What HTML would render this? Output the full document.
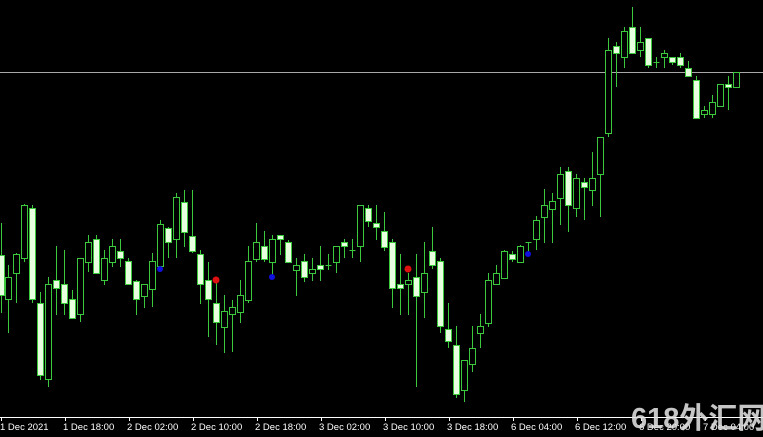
<!DOCTYPE html>
<html><head><meta charset="utf-8"><style>
html,body{margin:0;padding:0;background:#000;width:763px;height:437px;overflow:hidden}
svg{display:block}
.l{font-family:"Liberation Sans",sans-serif;font-size:9.5px;fill:#fff}
.wm{font-family:"Liberation Sans","Noto Sans CJK SC",sans-serif;font-size:29px;font-weight:bold;fill:#e0e0e0;fill-opacity:0.88}
</style></head><body>
<svg id="s" width="763" height="437" xmlns="http://www.w3.org/2000/svg">
<rect width="763" height="437" fill="#000"/>
<line x1="0" y1="72.5" x2="763" y2="72.5" stroke="#a8a8a8" stroke-width="1"/>
<g id="c"></g>
<circle cx="160" cy="269" r="3" fill="#1010e0"/>
<circle cx="272" cy="277" r="3" fill="#1010e0"/>
<circle cx="528" cy="254" r="3" fill="#1010e0"/>
<circle cx="216" cy="280" r="3.5" fill="#e01010"/>
<circle cx="408" cy="269" r="3.5" fill="#e01010"/>
<line x1="0" y1="417.5" x2="763" y2="417.5" stroke="#fff" stroke-width="1"/>
<g stroke="#fff" stroke-width="1">
<line x1="1.5" y1="417" x2="1.5" y2="421"/><line x1="65.5" y1="417" x2="65.5" y2="421"/><line x1="129.5" y1="417" x2="129.5" y2="421"/><line x1="193.5" y1="417" x2="193.5" y2="421"/><line x1="257.5" y1="417" x2="257.5" y2="421"/><line x1="321.5" y1="417" x2="321.5" y2="421"/><line x1="385.5" y1="417" x2="385.5" y2="421"/><line x1="449.5" y1="417" x2="449.5" y2="421"/><line x1="513.5" y1="417" x2="513.5" y2="421"/><line x1="577.5" y1="417" x2="577.5" y2="421"/><line x1="641.5" y1="417" x2="641.5" y2="421"/><line x1="705.5" y1="417" x2="705.5" y2="421"/>
</g>
<g class="l">
<text x="0" y="430">1 Dec 2021</text><text x="63" y="430">1 Dec 18:00</text><text x="127" y="430">2 Dec 02:00</text><text x="191" y="430">2 Dec 10:00</text><text x="255" y="430">2 Dec 18:00</text><text x="319" y="430">3 Dec 02:00</text><text x="383" y="430">3 Dec 10:00</text><text x="447" y="430">3 Dec 18:00</text><text x="511" y="430">6 Dec 04:00</text><text x="575" y="430">6 Dec 12:00</text><text x="639" y="430">6 Dec 20:00</text><text x="703" y="430">7 Dec 04:00</text>
</g>
<text class="wm" x="631" y="428">618外汇网</text>
</svg>
<script>
var d=[
[1,223,313,255,295,1],[8,265,333,277,299,0],[16,253,303,254,273,0],[24,204,262,205,258,0],[32,205,303,208,299,1],
[40,292,380,303,375,1],[48,277,387,284,379,0],[56,246,315,280,288,1],[64,250,315,284,303,1],[72,290,318,299,318,1],
[80,258,322,258,314,0],[88,235,272,242,262,0],[96,235,273,239,273,1],[104,250,285,258,280,0],[112,239,267,246,262,0],
[120,239,267,251,258,1],[128,258,285,261,284,1],[136,280,315,281,299,1],[144,284,308,284,296,0],[152,253,307,261,289,0],
[160,220,266,224,266,0],[168,227,258,228,242,1],[176,193,258,197,239,0],[184,190,247,202,232,1],[192,190,253,236,251,1],
[200,250,304,254,284,1],[208,262,337,280,299,1],[216,280,345,303,322,1],[224,295,353,311,327,0],[232,300,352,307,314,0],
[240,280,323,295,312,0],[248,246,303,261,300,0],[256,223,262,242,259,0],[264,231,262,246,259,1],[272,235,275,239,262,0],
[280,235,255,235,239,1],[288,240,262,242,262,1],[296,258,296,265,270,0],[304,254,282,261,277,1],[312,258,281,269,273,0],
[320,246,281,265,269,1],[328,254,270,265,265,2],[336,246,273,246,262,0],[344,239,258,242,246,1],[352,239,258,250,250,2],
[360,205,262,205,246,0],[368,205,227,208,221,1],[376,205,240,223,227,1],[384,212,251,231,247,1],[392,239,308,242,288,1],
[400,254,315,284,288,1],[408,273,315,280,284,0],[416,254,387,277,296,1],[424,242,318,273,292,0],[432,227,269,251,265,1],
[440,258,333,261,326,1],[448,303,348,329,341,1],[456,326,398,345,394,1],[464,360,402,360,390,0],[472,326,372,348,364,0],
[480,314,348,326,333,0],[488,273,327,280,323,0],[496,265,285,273,284,0],[504,250,278,251,278,0],[512,251,262,254,259,1],
[520,245,262,246,262,0],[528,242,253,242,242,2],[536,216,250,220,239,0],[544,189,243,205,217,0],[552,193,243,201,209,0],
[560,167,225,174,198,0],[568,167,232,171,205,1],[576,174,217,178,208,0],[584,178,220,182,187,1],[592,152,206,178,190,0],
[600,137,217,137,174,0],[608,38,137,50,133,0],[616,42,87,46,53,1],[624,27,68,31,57,0],[632,7,53,27,53,1],
[640,27,57,42,50,0],[648,38,68,38,65,1],[656,57,68,62,62,2],[664,50,68,53,57,0],[672,57,65,57,62,1],
[680,53,68,57,65,1],[688,61,77,68,76,1],[696,76,118,80,118,1],[704,106,118,110,114,0],[712,95,118,102,114,0],
[720,84,106,84,106,0],[728,76,110,84,87,1],[736,72,87,72,87,0]];
var g=document.getElementById('c'),h='',G='#3cc83c';
d.forEach(function(c){var x=c[0]+0.5;
h+='<line x1="'+x+'" y1="'+c[1]+'" x2="'+x+'" y2="'+c[2]+'" stroke="'+G+'" stroke-width="1"/>';
if(c[5]==2){h+='<line x1="'+(x-3)+'" y1="'+(c[3]+0.5)+'" x2="'+(x+3)+'" y2="'+(c[3]+0.5)+'" stroke="'+G+'"/>';}
else{var ht=Math.max(c[4]-c[3],3);h+='<rect x="'+(x-3)+'" y="'+(c[3]+0.5)+'" width="6" height="'+ht+'" fill="'+(c[5]?'#e8ffe0':'#000')+'" stroke="'+G+'" stroke-width="1"/>';}
});
g.innerHTML=h;
</script>
</body></html>
